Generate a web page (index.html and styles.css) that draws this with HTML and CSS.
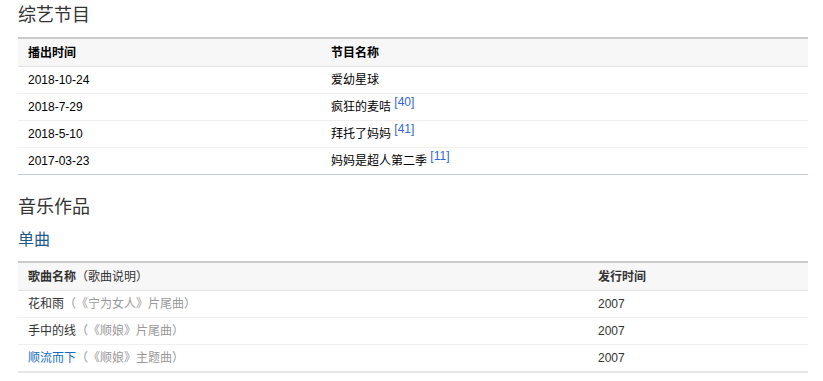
FILE: index.html
```html
<!DOCTYPE html>
<html lang="zh">
<head>
<meta charset="utf-8">
<link rel="stylesheet" href="styles.css">
</head>
<body>
<div class="page">
  <h2 class="title first">综艺节目</h2>
  <table class="tbl tbl-show">
    <colgroup><col class="c1"><col></colgroup>
    <thead><tr><th>播出时间</th><th>节目名称</th></tr></thead>
    <tbody>
      <tr><td>2018-10-24</td><td>爱幼星球</td></tr>
      <tr><td>2018-7-29</td><td>疯狂的麦咭 <sup class="ref">[40]</sup></td></tr>
      <tr><td>2018-5-10</td><td>拜托了妈妈 <sup class="ref">[41]</sup></td></tr>
      <tr><td>2017-03-23</td><td>妈妈是超人第二季 <sup class="ref">[11]</sup></td></tr>
    </tbody>
  </table>
  <h2 class="title second">音乐作品</h2>
  <h3 class="subtitle">单曲</h3>
  <table class="tbl tbl-song">
    <colgroup><col class="c1s"><col></colgroup>
    <thead><tr><th>歌曲名称<span class="th-note">（歌曲说明）</span></th><th>发行时间</th></tr></thead>
    <tbody>
      <tr><td>花和雨<span class="note">（《宁为女人》片尾曲）</span></td><td>2007</td></tr>
      <tr><td>手中的线<span class="note">（《顺娘》片尾曲）</span></td><td>2007</td></tr>
      <tr><td><a class="link" href="#">顺流而下</a><span class="note">（《顺娘》主题曲）</span></td><td>2007</td></tr>
    </tbody>
  </table>
</div>
</body>
</html>
```
FILE: styles.css
```css
html, body {
  margin: 0;
  padding: 0;
  background: #fff;
}
body {
  font-family: "Liberation Sans", "Noto Sans CJK SC", sans-serif;
  color: #333;
  font-size: 12px;
  text-spacing-trim: space-all;
}
.page {
  padding: 0 15px 0 18px;
  width: 790px;
}
.title {
  margin: 0;
  font-size: 18px;
  font-weight: normal;
  line-height: 24px;
  color: #333;
}
.title.first {
  padding-top: 3px;
  margin-bottom: 10px;
}
.title.second {
  margin-top: 20px;
  margin-bottom: 10px;
}
.subtitle {
  margin: 0 0 10px;
  font-size: 16px;
  font-weight: normal;
  line-height: 22px;
  color: #1f5a8a;
}
.tbl {
  width: 790px;
  border-collapse: collapse;
  table-layout: fixed;
  border-top: 2px solid #cbcbcb;
}
.tbl-show {
  border-bottom: 1px solid #c5ccd6;
}
.tbl-song {
  border-bottom: 2px solid #e6e6e6;
}
.c1 { width: 303px; }
.c1s { width: 570px; }
.tbl th, .tbl td {
  height: 26px;
  padding: 0 10px;
  text-align: left;
  vertical-align: middle;
  line-height: 18px;
  color: #000;
  font-size: 12px;
}
.tbl th {
  height: 27px;
  background: #f7f7f7;
  font-weight: bold;
  border-bottom: 1px solid #e0e0e0;
}
.tbl td {
  border-bottom: 1px solid #f0f0f0;
}
.tbl-song th, .tbl-song td {
  color: #333;
}
.tbl-song tbody tr:last-child td {
  border-bottom: none;
}
.tbl-show tbody tr:last-child td {
  border-bottom: none;
}
.th-note {
  font-weight: normal;
}
.note {
  color: #999;
}
.link {
  color: #136ec2;
  text-decoration: none;
}
.ref {
  color: #3366cc;
  font-size: 12px;
  line-height: 0;
  vertical-align: 5px;
}
```
